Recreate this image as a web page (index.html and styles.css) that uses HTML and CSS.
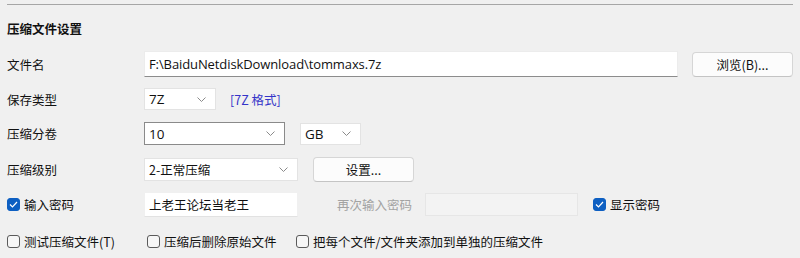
FILE: index.html
```html
<!DOCTYPE html>
<html lang="zh-CN">
<head>
<meta charset="utf-8">
<title>压缩文件设置</title>
<link rel="stylesheet" href="styles.css">
</head>
<body>
<div class="panel">
  <div class="sep"></div>
  <div class="title">压缩文件设置</div>

  <div class="row r1">
    <div class="label">文件名</div>
    <div class="input path">F:\BaiduNetdiskDownload\tommaxs.7z</div>
    <div class="btn browse">浏览(B)...</div>
  </div>

  <div class="row r2">
    <div class="label">保存类型</div>
    <div class="select s-type"><span>7Z</span><svg class="chev" width="9" height="5" viewBox="0 0 9 5"><polyline points="0.5,0.5 4.5,4.5 8.5,0.5" fill="none" stroke="#8a8a8a" stroke-width="1"/></svg></div>
    <div class="link">[7Z 格式]</div>
  </div>

  <div class="row r3">
    <div class="label">压缩分卷</div>
    <div class="select s-vol focus"><span>10</span><svg class="chev" width="9" height="5" viewBox="0 0 9 5"><polyline points="0.5,0.5 4.5,4.5 8.5,0.5" fill="none" stroke="#8a8a8a" stroke-width="1"/></svg></div>
    <div class="select s-unit"><span>GB</span><svg class="chev" width="9" height="5" viewBox="0 0 9 5"><polyline points="0.5,0.5 4.5,4.5 8.5,0.5" fill="none" stroke="#8a8a8a" stroke-width="1"/></svg></div>
  </div>

  <div class="row r4">
    <div class="label">压缩级别</div>
    <div class="select s-level"><span>2-正常压缩</span><svg class="chev" width="9" height="5" viewBox="0 0 9 5"><polyline points="0.5,0.5 4.5,4.5 8.5,0.5" fill="none" stroke="#8a8a8a" stroke-width="1"/></svg></div>
    <div class="btn settings">设置...</div>
  </div>

  <div class="row r5">
    <label class="check label"><span class="box on"><svg width="9" height="7" viewBox="0 0 9 7"><polyline points="1,3.5 3.5,6 8,1" fill="none" stroke="#fff" stroke-width="1.2"/></svg></span>输入密码</label>
    <div class="input pwd">上老王论坛当老王</div>
    <div class="dim">再次输入密码</div>
    <div class="input disabled"></div>
    <label class="check show"><span class="box on"><svg width="9" height="7" viewBox="0 0 9 7"><polyline points="1,3.5 3.5,6 8,1" fill="none" stroke="#fff" stroke-width="1.2"/></svg></span>显示密码</label>
  </div>

  <div class="row r6">
    <label class="check c1"><span class="box"></span>测试压缩文件(T)</label>
    <label class="check c2"><span class="box"></span>压缩后删除原始文件</label>
    <label class="check c3"><span class="box"></span>把每个文件/文件夹添加到单独的压缩文件</label>
  </div>
</div>
</body>
</html>
```

FILE: styles.css
```css
html, body {
  margin: 0;
  padding: 0;
  background: #f0f0f0;
}
body {
  width: 800px;
  height: 258px;
  overflow: hidden;
  font-family: "Noto Sans CJK SC", "Noto Sans", sans-serif;
  font-size: 12.5px;
  color: #111;
}
.panel {
  padding: 4px 7px 0 7px;
}
.sep {
  height: 1px;
  background: #a6a6a6;
}
.title {
  margin-top: 12px;
  height: 24px;
  line-height: 24px;
  font-weight: bold;
}
.row {
  display: flex;
  align-items: center;
}
.label {
  width: 137px;
  flex: none;
}
.r1 { margin-top: 10px; height: 26px; }
.r2 { margin-top: 11px; height: 22px; }
.r3 { margin-top: 12px; height: 23px; }
.r4 { margin-top: 12px; height: 25px; }
.r5 { margin-top: 10px; height: 25px; }
.r6 { margin-top: 12px; height: 24px; }

.input {
  box-sizing: border-box;
  background: #fff;
  border: 1px solid #ececec;
  padding-left: 4px;
  display: flex;
  align-items: center;
}
.path {
  width: 534px;
  height: 26px;
  border-bottom: 1px solid #8c8c8c;
  font-family: "Open Sans", "Noto Sans CJK SC", sans-serif;
  font-size: 13px;
  letter-spacing: -0.1px;
}
.btn {
  box-sizing: border-box;
  background: #fcfcfc;
  border: 1px solid #d6d6d6;
  border-bottom-color: #c4c4c4;
  border-radius: 4px;
  display: flex;
  align-items: center;
  justify-content: center;
}
.browse {
  margin-left: 14px;
  width: 101px;
  height: 25px;
}
.settings {
  margin-left: 15px;
  width: 101px;
  height: 25px;
}
.select {
  box-sizing: border-box;
  background: #fff;
  border: 1px solid #e3e3e3;
  display: flex;
  align-items: center;
  justify-content: space-between;
  padding: 0 9px 0 4px;
}
.select span {
  font-family: "Open Sans", "Noto Sans CJK SC", sans-serif;
  font-size: 13.5px;
}
.s-level span {
  font-family: "Noto Sans CJK SC", sans-serif;
  font-size: 12.5px;
}
.chev { flex: none; }
.s-type { width: 72px; height: 22px; }
.s-vol { width: 141px; height: 23px; }
.s-vol.focus { border-color: #8a8a8a; }
.s-unit { width: 61px; height: 22px; margin-left: 15px; }
.s-level { width: 154px; height: 23px; }
.link {
  margin-left: 14px;
  color: #3434c8;
}
.check {
  display: flex;
  align-items: center;
}
.box {
  box-sizing: border-box;
  width: 13px;
  height: 13px;
  border: 1px solid #5a5a5a;
  border-radius: 3px;
  background: #f6f6f6;
  margin-right: 4px;
  flex: none;
  display: flex;
  align-items: center;
  justify-content: center;
}
.box.on {
  background: #0d5fc2;
  border-color: #0d5fc2;
}
.pwd {
  width: 154px;
  height: 25px;
  border-color: #f0f0f0;
  border-bottom-color: #e2e2e2;
}
.dim {
  margin-left: 39px;
  color: #a3a3a3;
  width: 88px;
}
.disabled {
  width: 153px;
  height: 23px;
  background: #f3f3f3;
  border-color: #e6e6e6;
}
.show {
  margin-left: 15px;
}
.c1 { width: 140px; }
.c2 { width: 149px; }
```
